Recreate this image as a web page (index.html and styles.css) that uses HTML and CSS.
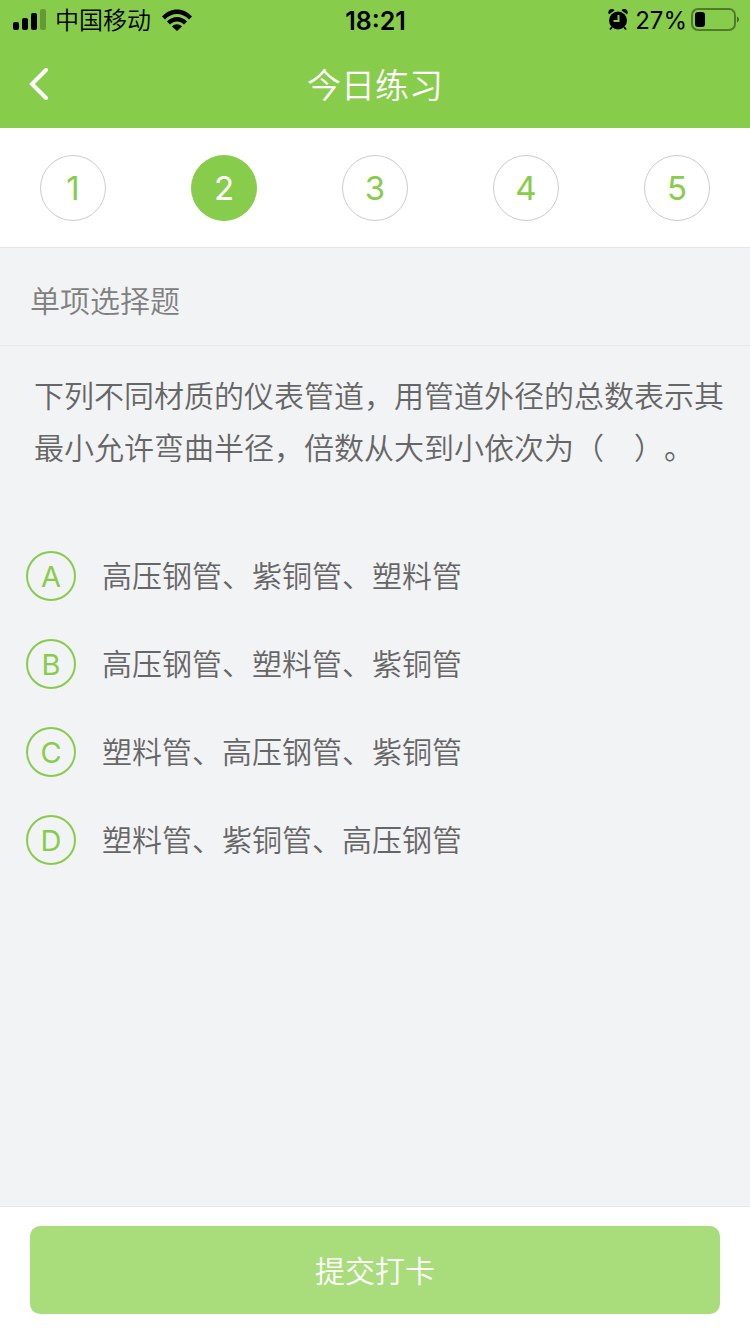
FILE: index.html
```html
<!DOCTYPE html>
<html lang="zh-CN">

<head>
    <meta charset="UTF-8">
    <meta name="viewport" content="width=device-width, initial-scale=1.0">
    <title>今日练习</title>
    <link rel="stylesheet" href="styles.css">
</head>

<body>
    <header class="header">
        <div class="status-bar">
            <div class="status-left">
                <svg class="signal" width="34" height="22" viewBox="0 0 34 22">
                    <rect x="1" y="13" width="6" height="8" rx="2" />
                    <rect x="10" y="9" width="6" height="12" rx="2" />
                    <rect x="19" y="4" width="6" height="17" rx="2" />
                    <rect x="28" y="0" width="6" height="21" rx="2" opacity="0.25" />
                </svg>
                <span>中国移动</span>
                <svg class="wifi" width="30" height="22" viewBox="0 0 30 22">
                    <path d="M0 7.6C8.4-1.8 21.6-1.8 30 7.6L27 10.6C20.2 3.2 9.8 3.2 3 10.6Z" />
                    <path d="M5 12.6C10.6 6.4 19.4 6.4 25 12.6L22 15.6C18 11.3 12 11.3 8 15.6Z" />
                    <path d="M10 17.4C12.8 14.6 17.2 14.6 20 17.4L15 22Z" />
                </svg>
            </div>
            <span class="time">18:21</span>
            <div class="status-right">
                <svg class="alarm" width="20" height="22" viewBox="0 0 20 22">
                    <path d="M1 5.2A3.2 3.2 0 0 1 6.5 1.5ZM19 5.2A3.2 3.2 0 0 0 13.500 1.5Z" />
                    <circle cx="10" cy="11.5" r="9" />
                    <path class="legs" d="M4 18L2 20.5M16 18L18 20.5" />
                    <path class="hands" d="M10.5 6V12H5.5" />
                </svg>
                <span class="percent">27%</span>
                <svg class="battery" width="48" height="24" viewBox="0 0 48 24">
                    <rect class="shell" x="1" y="1" width="43" height="21" rx="6" />
                    <rect x="4" y="4" width="10" height="15" rx="3" />
                    <path d="M46 8.5Q48 9.5 48 11.5T46 14.5Z" opacity="0.5" />
                </svg>
            </div>
        </div>
        <nav class="nav-bar">
            <button class="back" type="button" aria-label="返回">
                <svg width="20" height="32" viewBox="0 0 20 32">
                    <path d="M18 2L4 16L18 30" />
                </svg>
            </button>
            <h1>今日练习</h1>
        </nav>
    </header>

    <div class="steps">
        <button type="button">1</button>
        <button type="button" class="active">2</button>
        <button type="button">3</button>
        <button type="button">4</button>
        <button type="button">5</button>
    </div>

    <form class="exercise">
        <h2>单项选择题</h2>
        <p class="question">下列不同材质的仪表管道，用管道外径的总数表示其最小允许弯曲半径，倍数从大到小依次为（　）。</p>
        <div class="options">
            <label class="option">
                <input type="radio" name="answer" value="A">
                <span class="letter">A</span>
                <span class="text">高压钢管、紫铜管、塑料管</span>
            </label>
            <label class="option">
                <input type="radio" name="answer" value="B">
                <span class="letter">B</span>
                <span class="text">高压钢管、塑料管、紫铜管</span>
            </label>
            <label class="option">
                <input type="radio" name="answer" value="C">
                <span class="letter">C</span>
                <span class="text">塑料管、高压钢管、紫铜管</span>
            </label>
            <label class="option">
                <input type="radio" name="answer" value="D">
                <span class="letter">D</span>
                <span class="text">塑料管、紫铜管、高压钢管</span>
            </label>
        </div>
        <div class="footer">
            <button type="submit">提交打卡</button>
        </div>
    </form>
</body>

</html>
```
FILE: styles.css
```css
* {
    margin: 0;
    padding: 0;
    box-sizing: border-box;
}

body {
    display: flex;
    flex-direction: column;
    min-height: 100vh;
    background-color: #f2f3f5;
    color: #666;
    font-family: Inter, "Noto Sans CJK SC", sans-serif;
    font-size: 30px;
    font-weight: 350;
    text-spacing-trim: space-all;
}

button {
    border: none;
    font: inherit;
    cursor: pointer;
}

svg {
    display: block;
}

/* header */
.header {
    background-color: #87cc4b;
}

.status-bar {
    display: grid;
    grid-template-columns: 1fr auto 1fr;
    align-items: center;
    height: 40px;
    padding: 2px 11px 0 12px;
    color: #000;
    font-size: 24px;
    line-height: 38px;
}

.status-left,
.status-right {
    display: flex;
    align-items: center;
}

.status-left {
    gap: 9px;
}

.status-left svg {
    margin-bottom: 2px;
}

.status-right {
    justify-content: flex-end;
    gap: 4px;
}

.wifi {
    margin-left: 2px;
}

.time {
    font-size: 25px;
    font-weight: 600;
}

.percent {
    margin-left: 3px;
    font-weight: 400;
}

.alarm,
.battery {
    margin-bottom: 2px;
}

.alarm .legs {
    stroke: #000;
    stroke-width: 2;
}

.alarm .hands {
    fill: none;
    stroke: #87cc4b;
    stroke-width: 2;
}

.battery .shell {
    fill: none;
    stroke: #000;
    stroke-width: 2;
    opacity: 0.4;
}

.nav-bar {
    display: grid;
    grid-template-columns: 80px 1fr 80px;
    align-items: center;
    height: 88px;
    color: #fff;
}

.nav-bar h1 {
    padding-bottom: 2px;
    font-size: 34px;
    font-weight: 350;
    text-align: center;
}

.back {
    padding: 8px 28px;
    background: none;
}

.back path {
    fill: none;
    stroke: #fff;
    stroke-width: 4;
    stroke-linecap: round;
}

/* question numbers */
.steps {
    display: flex;
    justify-content: space-between;
    padding: 27px 40px 26px;
    border-bottom: 1px solid #e5e5e5;
    background-color: #fff;
}

.steps button {
    width: 66px;
    height: 66px;
    border: 1px solid #ccc;
    border-radius: 50%;
    background-color: #fff;
    color: #87cc4b;
    font-size: 33px;
    font-weight: 400;
}

.steps .active {
    border-color: #87cc4b;
    background-color: #87cc4b;
    color: #fff;
}

/* exercise */
.exercise {
    display: flex;
    flex-direction: column;
    flex: 1;
}

.exercise h2 {
    padding: 31px 30px 22px;
    border-bottom: 1px solid #e7e8ea;
    color: #808080;
    font-size: 30px;
    font-weight: 350;
    line-height: 44px;
}

.question {
    padding: 24px 20px 58px 34px;
    line-height: 52px;
}

.option {
    display: grid;
    grid-template-columns: 50px 1fr;
    align-items: center;
    column-gap: 26px;
    height: 88px;
    padding: 0 26px;
    cursor: pointer;
}

/* the letter sits in the same cell as its radio */
.option input,
.option .letter {
    grid-area: 1 / 1;
}

.option input {
    width: 50px;
    height: 50px;
    border: 2px solid #87cc4b;
    border-radius: 50%;
    appearance: none;
}

.option .letter {
    color: #87cc4b;
    font-size: 29px;
    font-weight: 400;
    text-align: center;
}

.option .text {
    padding-bottom: 4px;
}

.option input:checked {
    background-color: #87cc4b;
}

.option input:checked + .letter {
    color: #fff;
}

.footer {
    margin-top: auto;
    padding: 19px 30px 20px;
    border-top: 1px solid #e7e8ea;
    background-color: #fff;
}

.footer button {
    width: 100%;
    height: 88px;
    padding-bottom: 2px;
    border-radius: 10px;
    background-color: #a9dd7b;
    color: #fff;
}
```
